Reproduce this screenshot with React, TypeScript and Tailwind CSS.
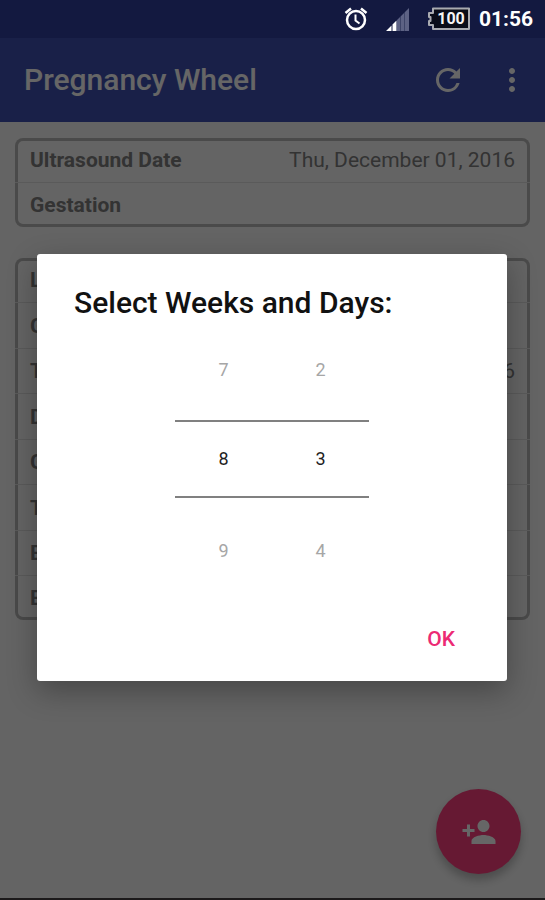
import { useState } from 'react';
import { MdMoreVert, MdPersonAdd, MdRefresh } from 'react-icons/md';

interface Row {
  label: string;
  value?: string;
}

const ULTRASOUND_ROWS: Row[] = [
  { label: 'Ultrasound Date', value: 'Thu, December 01, 2016' },
  { label: 'Gestation' },
];

const RESULT_ROWS: Row[] = [
  { label: 'LMP' },
  { label: 'GA' },
  { label: 'Today', value: 'Dec 1, 2016' },
  { label: 'Due Date' },
  { label: 'Gestation' },
  { label: 'Trimester' },
  { label: 'EGA' },
  { label: 'EDD' },
];

function AlarmIcon() {
  return (
    <svg width="24" height="24" viewBox="0 0 24 24" fill="none" stroke="#ffffff" aria-hidden="true">
      <circle cx="12" cy="13" r="9" strokeWidth="2.5" />
      <path d="M1.500 6L7 1.500 M22.500 6L17 1.500" strokeWidth="2.500" />
      <path d="M11.500 7.500V13.500L15.500 16.500" strokeWidth="2" />
    </svg>
  );
}

function SignalIcon() {
  return (
    <svg width="23" height="23" viewBox="0 0 23 23" aria-hidden="true">
      <path d="M0 23L5.500 17.500V23Z M6.500 16.500L10.500 12.500V23H6.500Z" fill="#ffffff" />
      <path d="M11 12L14.500 8.500V23H11Z M15 8L18.500 4.500V23H15Z M19 4L23 0V23H19Z" fill="#5d6284" />
      <path d="M14.500 8.500V23 M18.500 4.500V23" stroke="#3d4468" strokeWidth="1" />
    </svg>
  );
}

function BatteryIcon() {
  return (
    <svg width="44" height="24" viewBox="0 0 44 24" role="img" aria-label="Battery 100%">
      <path
        d="M6 1.500H42V22H6V18H2V14H3.500V10H2V6H6Z"
        fill="#0a0d18"
        stroke="#a9abb0"
        strokeWidth="2"
        strokeLinejoin="round"
      />
      <text x="24" y="17" textAnchor="middle" fontSize="16" fontWeight="700" fill="#f5f5f5">
        100
      </text>
    </svg>
  );
}

function StatusBar() {
  return (
    <div className="relative z-30 flex h-[38px] items-center justify-end bg-[#131940] pr-3 text-white">
      <span className="mr-[18px]">
        <AlarmIcon />
      </span>
      <SignalIcon />
      <span className="ml-[18px] mr-2">
        <BatteryIcon />
      </span>
      <span className="text-[21px] font-bold leading-6">01:56</span>
    </div>
  );
}

function InfoCard({ rows }: { rows: Row[] }) {
  return (
    <dl className="rounded-lg text-[#808080] ring-3 ring-inset ring-[#b8b8b8]">
      {rows.map((row) => (
        <div
          key={row.label}
          className="flex h-[45px] items-center justify-between border-b border-[#e2e2e2] px-[15px] pt-0.5 text-[21px] even:h-[46px] last:h-11! last:border-b-0"
        >
          <dt className="font-bold">{row.label}</dt>
          {row.value && <dd>{row.value}</dd>}
        </div>
      ))}
    </dl>
  );
}

interface NumberPickerProps {
  label: string;
  value: number;
  max: number;
  onChange: (value: number) => void;
}

function NumberPicker({ label, value, max, onChange }: NumberPickerProps) {
  const count = max + 1;
  const previous = (value + count - 1) % count;
  const next = (value + 1) % count;

  return (
    <div className="flex w-[97px] flex-col text-lg">
      <button type="button" onClick={() => onChange(previous)} className="h-[100px] text-[#a6a6a6]">
        {previous}
      </button>
      <input
        type="text"
        inputMode="numeric"
        aria-label={label}
        value={value}
        onChange={(e) => onChange(Math.min(max, Number(e.target.value) || 0))}
        className="h-[78px] w-full border-y-2 border-[#808080] text-center text-[#1f1f1f] outline-none"
      />
      <button type="button" onClick={() => onChange(next)} className="h-[106px] text-[#a6a6a6]">
        {next}
      </button>
    </div>
  );
}

export default function App() {
  const [weeks, setWeeks] = useState(8);
  const [days, setDays] = useState(3);
  const [open, setOpen] = useState(true);

  return (
    <div className="relative flex min-h-screen flex-col bg-[#fafafa] font-[Roboto,sans-serif]">
      <StatusBar />

      <header className="flex h-[84px] items-center bg-[#3f51b5] pl-6 pr-[15px] text-white">
        <h1 className="flex-1 text-[30px] font-medium leading-9">Pregnancy Wheel</h1>
        <button type="button" aria-label="Refresh" className="mr-7">
          <MdRefresh className="size-9" />
        </button>
        <button type="button" aria-label="More options">
          <MdMoreVert className="size-9" />
        </button>
      </header>

      <main className="flex flex-1 flex-col gap-[31px] px-[15px] pt-4">
        <InfoCard rows={ULTRASOUND_ROWS} />
        <InfoCard rows={RESULT_ROWS} />
      </main>

      <button
        type="button"
        aria-label="Add person"
        className="absolute bottom-[26px] right-6 flex size-[85px] items-center justify-center rounded-full bg-[#ff4081] text-white shadow-[0_6px_10px_rgba(0,0,0,0.25)]"
      >
        <MdPersonAdd className="size-9" />
      </button>

      <div className="relative z-30 h-0.5 bg-[#1c1a1b]" />

      {/* Dialog */}
      {open && (
        <div className="absolute inset-0 z-20 flex items-center bg-black/60 pb-1 pl-[37px] pr-[38px] pt-[38px]">
          <div
            role="dialog"
            aria-labelledby="dialog-title"
            className="w-full rounded-[3px] bg-white pb-[17px] pt-8 shadow-[0_10px_30px_rgba(0,0,0,0.3)]"
          >
            <h2 id="dialog-title" className="px-[37px] text-[30px] font-medium leading-[34px] text-[#111111]">
              Select Weeks and Days:
            </h2>
            <div className="flex justify-center">
              <NumberPicker label="Weeks" value={weeks} max={42} onChange={setWeeks} />
              <NumberPicker label="Days" value={days} max={6} onChange={setDays} />
            </div>
            <div className="mt-3 flex justify-end pr-9">
              <button
                type="button"
                onClick={() => setOpen(false)}
                className="h-12 px-4 text-[21px] font-medium text-[#ec2a74]"
              >
                OK
              </button>
            </div>
          </div>
        </div>
      )}
    </div>
  );
}
